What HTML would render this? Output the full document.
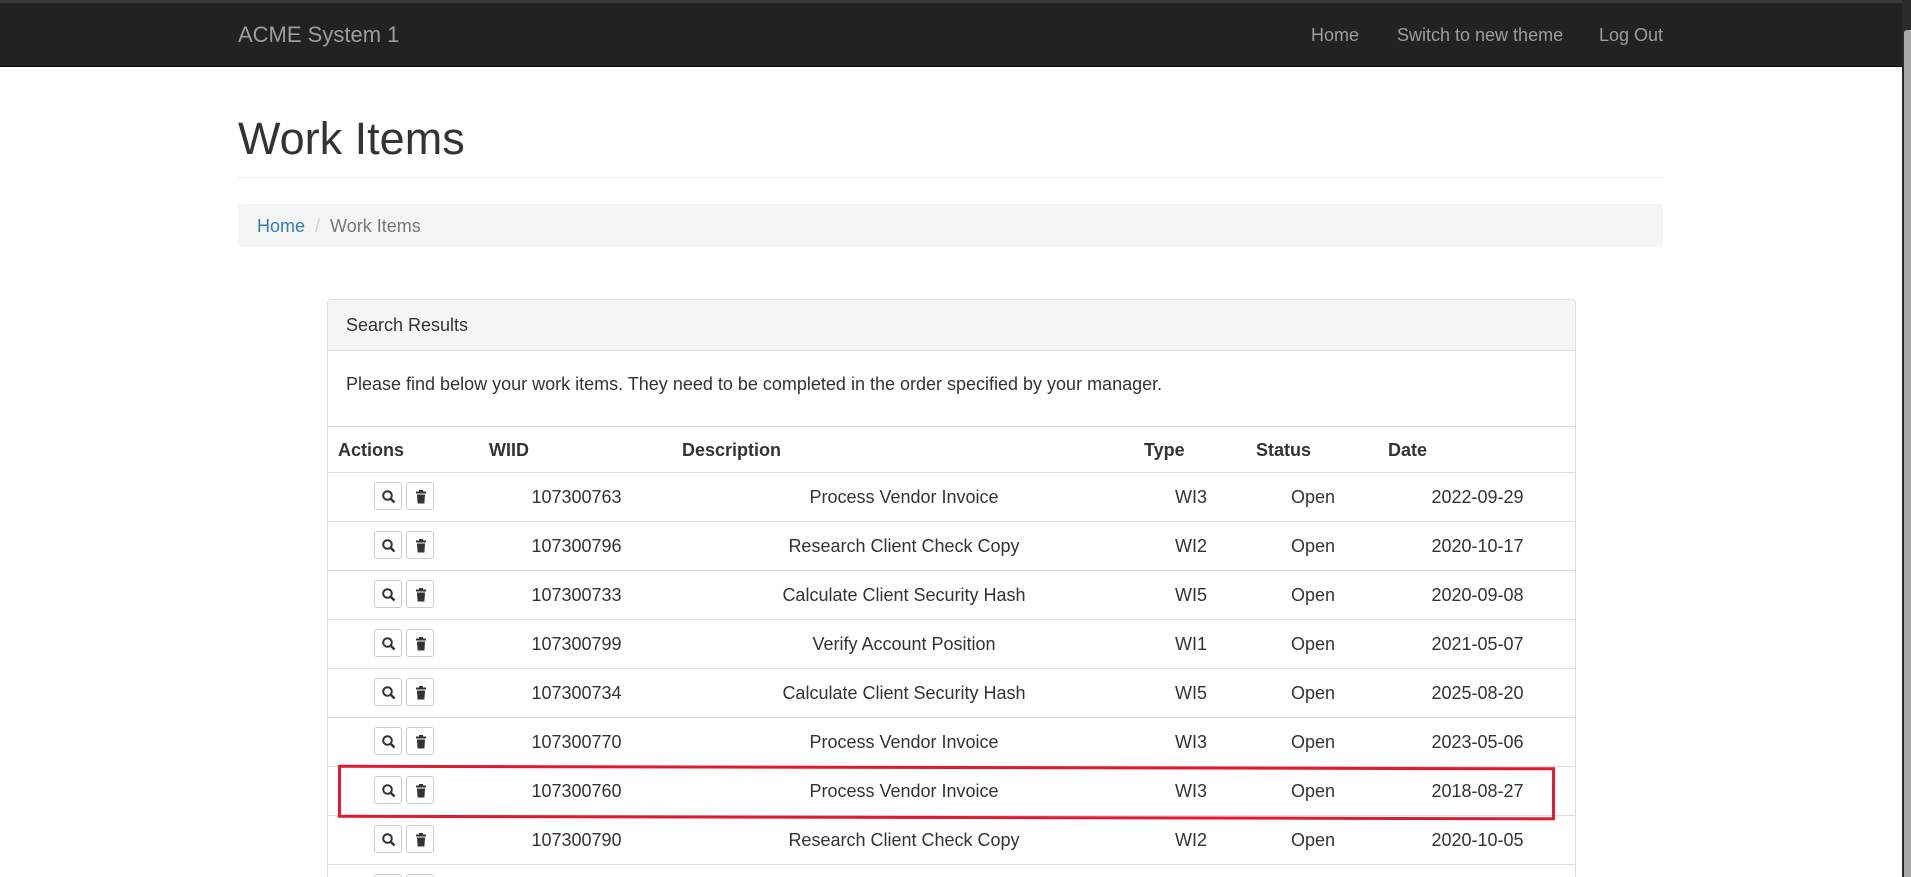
<!DOCTYPE html>
<html style="width:1911px;height:877px;overflow:hidden"><head><meta charset="utf-8"><style>
*{box-sizing:border-box}
body{margin:0;width:1911px;height:877px;overflow:hidden;background:#fff;font-family:"Liberation Sans",Arial,sans-serif;color:#333;font-size:18px;position:relative}
.nav{position:absolute;left:0;top:0;width:1902px;height:67px;background:#222;border-top:3px solid #3a3a3a;border-bottom:1px solid #080808}
.nav span{position:absolute;color:#9d9d9d;top:22px}
.sb{position:absolute;right:0;top:0;width:9px;height:877px;background:#2a2a2a}
.sb div{position:absolute;left:2px;top:30px;width:7px;height:847px;background:#a8a8a8;border-radius:3px 0 0 0}
h1{position:absolute;left:238px;top:113px;margin:0;font-weight:400;font-size:45px;color:#333}
.hr{position:absolute;left:238px;width:1425px;top:177px;border-top:1px solid #eee}
.bc{position:absolute;left:238px;top:204px;width:1425px;height:43px;background:#f5f5f5;border-radius:5px;padding:12px 19px}
.bc a{color:#337ab7}
.panel{position:absolute;left:327px;top:299px;width:1249px;height:578px;overflow:hidden;border:1px solid #ddd;border-bottom:none;border-radius:4px 4px 0 0}
.ph{height:51px;background:#f5f5f5;border-bottom:1px solid #ddd;padding:15px 18px}
.pb{height:76px;padding:23px 18px;border-bottom:1px solid #ddd}
.row{position:relative;height:49px;border-bottom:1px solid #ddd}
.row div{position:absolute;top:0;height:49px;line-height:48px;text-align:center}
.th div{text-align:left;font-weight:bold;line-height:46px}
.c1{left:0;width:152px}.c2{left:152px;width:193px}.c3{left:345px;width:462px}.c4{left:807px;width:112px}.c5{left:919px;width:132px}.c6{left:1051px;width:197px}
.btn{display:inline-block;width:28px;height:28px;border:1px solid #ccc;border-radius:3px;vertical-align:middle;margin:0 2px;position:relative;top:-2px}
.btn svg{position:absolute;left:6px;top:6px}
.red{position:absolute;left:338px;top:766px;width:1217px;height:53px;border:3px solid #e3192f;transform:rotate(0.12deg)}
</style></head><body>
<div class="nav"><span style="left:238px;font-size:22px;top:19px">ACME System 1</span><span style="left:1311px">Home</span><span style="left:1397px">Switch to new theme</span><span style="left:1599px">Log Out</span></div>
<div class="sb"><div></div></div>
<h1>Work Items</h1><div class="hr"></div>
<div class="bc"><a>Home</a><span style="color:#ccc;padding:0 10px">/</span><span style="color:#777">Work Items</span></div>
<div class="panel">
<div class="ph">Search Results</div>
<div class="pb">Please find below your work items. They need to be completed in the order specified by your manager.</div>
<div class="row th" style="height:46px"><div class="c1" style="padding-left:10px">Actions</div><div class="c2" style="padding-left:9px">WIID</div><div class="c3" style="padding-left:9px">Description</div><div class="c4" style="padding-left:9px">Type</div><div class="c5" style="padding-left:9px">Status</div><div class="c6" style="padding-left:9px">Date</div></div>
<div id="rows"></div>
</div>
<div class="red"></div>
<script>
var d=[["107300763","Process Vendor Invoice","WI3","2022-09-29"],["107300796","Research Client Check Copy","WI2","2020-10-17"],["107300733","Calculate Client Security Hash","WI5","2020-09-08"],["107300799","Verify Account Position","WI1","2021-05-07"],["107300734","Calculate Client Security Hash","WI5","2025-08-20"],["107300770","Process Vendor Invoice","WI3","2023-05-06"],["107300760","Process Vendor Invoice","WI3","2018-08-27"],["107300790","Research Client Check Copy","WI2","2020-10-05"],["","","",""]];
var b='<span class="btn"><svg width="16" height="16" viewBox="0 0 16 16"><circle cx="6.5" cy="6.5" r="4.3" fill="none" stroke="#333" stroke-width="2"/><path d="M9.5 9.5L13.5 13.5" stroke="#333" stroke-width="2.4"/></svg></span><span class="btn"><svg width="16" height="16" viewBox="0 0 16 16"><rect x="3" y="2.5" width="10" height="2" fill="#333"/><rect x="6" y="1" width="4" height="2" fill="#333"/><path d="M4 5.5h8l-.6 9h-6.8z" fill="#333"/></svg></span>';
var h='';d.forEach(function(r){h+='<div class="row"><div class="c1">'+b+'</div><div class="c2">'+r[0]+'</div><div class="c3">'+r[1]+'</div><div class="c4">'+r[2]+'</div><div class="c5">'+(r[0]?'Open':'')+'</div><div class="c6">'+r[3]+'</div></div>'});
document.getElementById('rows').innerHTML=h;
</script>
</body></html>
